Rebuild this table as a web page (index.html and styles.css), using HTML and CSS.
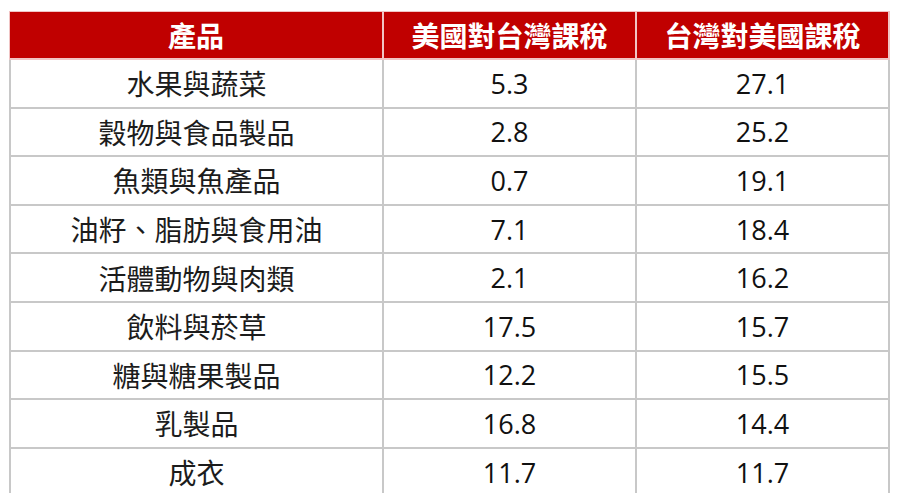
FILE: index.html
```html
<!DOCTYPE html>
<html lang="zh-Hant">
<head>
<meta charset="utf-8">
<title>關稅比較</title>
<link rel="stylesheet" href="styles.css">
</head>
<body>
<table class="tariff">
  <colgroup>
    <col class="c-prod">
    <col class="c-num">
    <col class="c-num">
  </colgroup>
  <thead>
    <tr>
      <th>產品</th>
      <th>美國對台灣課稅</th>
      <th>台灣對美國課稅</th>
    </tr>
  </thead>
  <tbody>
    <tr><td class="prod">水果與蔬菜</td><td class="num">5.3</td><td class="num">27.1</td></tr>
    <tr><td class="prod">穀物與食品製品</td><td class="num">2.8</td><td class="num">25.2</td></tr>
    <tr><td class="prod">魚類與魚產品</td><td class="num">0.7</td><td class="num">19.1</td></tr>
    <tr><td class="prod">油籽、脂肪與食用油</td><td class="num">7.1</td><td class="num">18.4</td></tr>
    <tr><td class="prod">活體動物與肉類</td><td class="num">2.1</td><td class="num">16.2</td></tr>
    <tr><td class="prod">飲料與菸草</td><td class="num">17.5</td><td class="num">15.7</td></tr>
    <tr><td class="prod">糖與糖果製品</td><td class="num">12.2</td><td class="num">15.5</td></tr>
    <tr><td class="prod">乳製品</td><td class="num">16.8</td><td class="num">14.4</td></tr>
    <tr><td class="prod">成衣</td><td class="num">11.7</td><td class="num">11.7</td></tr>
  </tbody>
</table>
</body>
</html>
```

FILE: styles.css
```css
html, body {
  margin: 0;
  padding: 0;
  background: #ffffff;
  overflow: hidden;
}

body {
  padding: 11px 0 0 9px;
  font-family: "Noto Sans CJK TC", "Noto Sans CJK SC", sans-serif;
  color: #1a1a1a;
}

.tariff {
  border-collapse: separate;
  border-spacing: 0;
  width: 881px;
  table-layout: fixed;
}

.c-prod { width: 375px; }
.c-num { width: 253px; }

.tariff th {
  background: #c00000;
  color: #ffffff;
  font-weight: 700;
  font-size: 28px;
  line-height: 1;
  height: 46px;
  padding: 0;
  text-align: center;
  vertical-align: middle;
  border-top: 1px solid #f1c4c4;
  border-bottom: 2px solid #f1c4c4;
  border-right: 2px solid #f1c4c4;
}

.tariff th:first-child {
  border-left: 1px solid #f1c4c4;
}

.tariff td {
  height: 46.6px;
  padding: 0;
  text-align: center;
  vertical-align: middle;
  border-right: 2px solid #c8c8c8;
  border-bottom: 2px solid #c8c8c8;
  line-height: 1;
}

.tariff td:first-child {
  border-left: 2px solid #c8c8c8;
}

.prod {
  font-size: 28px;
  color: #1c1c1c;
}

.num {
  font-family: "Open Sans", "Noto Sans", sans-serif;
  font-size: 27px;
  color: #111111;
}
```
